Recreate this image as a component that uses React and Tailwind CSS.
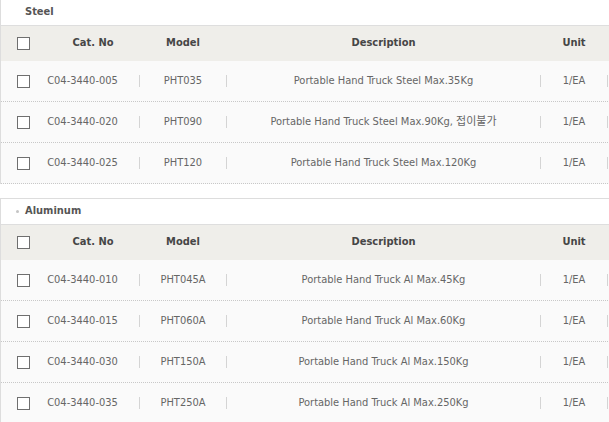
import React from "react";

const steel = [
  ["C04-3440-005", "PHT035", "Portable Hand Truck Steel Max.35Kg", "1/EA"],
  ["C04-3440-020", "PHT090", "Portable Hand Truck Steel Max.90Kg, 접이불가", "1/EA"],
  ["C04-3440-025", "PHT120", "Portable Hand Truck Steel Max.120Kg", "1/EA"],
];
const alu = [
  ["C04-3440-010", "PHT045A", "Portable Hand Truck Al Max.45Kg", "1/EA"],
  ["C04-3440-015", "PHT060A", "Portable Hand Truck Al Max.60Kg", "1/EA"],
  ["C04-3440-030", "PHT150A", "Portable Hand Truck Al Max.150Kg", "1/EA"],
  ["C04-3440-035", "PHT250A", "Portable Hand Truck Al Max.250Kg", "1/EA"],
];

const cols = "grid grid-cols-[46px_92px_1px_86px_1px_313px_1px_66px_1px_1fr] items-center whitespace-nowrap";

function Box() {
  return <span className="block w-[13px] h-[13px] border border-[#6f6f6f] bg-white ml-4" />;
}
function Sep() {
  return <span className="block w-px h-[12px] bg-[#d4d4d4]" />;
}

function Section({ title, rows, bullet }) {
  return (
    <div className={`border-l border-[#dddddd] ${bullet ? "border-t" : ""}`}>
      <div className="h-[25px] flex items-center pl-[15px] text-[11px] font-bold text-[#555]">
        {bullet ? <span className="w-[3px] h-[3px] rounded-full bg-[#c4c4c4] mr-[6px]" /> : <span className="w-[9px]" />}
        {title}
      </div>
      <div className={`${cols} h-[36px] border-t border-[#dedede] bg-[#efeeea] text-[11px] font-bold text-[#464646]`}>
        <Box />
        <div className="text-center">Cat. No</div>
        <span />
        <div className="text-center">Model</div>
        <span />
        <div className="text-center">Description</div>
        <span />
        <div className="text-center">Unit</div>
        <span />
        <span />
      </div>
      {rows.map((r, i) => (
        <div key={i} className={`${cols} h-[41px] bg-[#fafafa] border-b border-dotted border-[#c8c8c8] text-[11px] text-[#666]`}>
          <Box />
          <div className="text-center pr-[21px] pt-px">{r[0]}</div>
          <Sep />
          <div className="text-center pt-px">{r[1]}</div>
          <Sep />
          <div className="text-center pt-px">{r[2]}</div>
          <Sep />
          <div className="text-center pt-px">{r[3]}</div>
          <Sep />
          <span />
        </div>
      ))}
    </div>
  );
}

export default function App() {
  return (
    <div
      className="w-[609px] h-[422px] overflow-hidden bg-white font-stretch-condensed"
      style={{ fontFamily: '"DejaVu Sans", "Noto Sans CJK KR", sans-serif' }}
    >
      <div className="w-[680px] flex flex-col">
        <Section title="Steel" rows={steel} />
        <div className="h-[14px]" />
        <Section title="Aluminum" rows={alu} bullet />
      </div>
    </div>
  );
}
